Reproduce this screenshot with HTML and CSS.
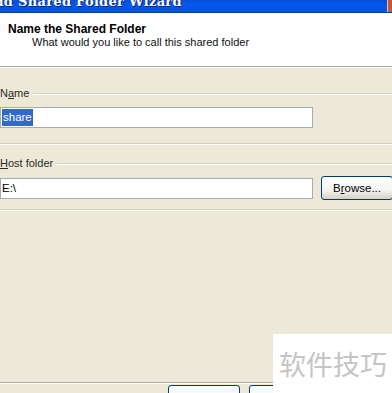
FILE: index.html
```html
<!DOCTYPE html>
<html lang="en">
<head>
  <meta charset="UTF-8" />
  <title>Add Shared Folder Wizard</title>
  <link rel="stylesheet" href="styles.css">
</head>
<body>
  <div class="window">
    <div class="titlebar">
      <span class="title">Add Shared Folder Wizard</span>
      <span class="close"></span>
    </div>

    <div class="header">
      <h1>Name the Shared Folder</h1>
      <p>What would you like to call this shared folder</p>
    </div>

    <div class="content">
      <div class="group-label"><span>N<u>a</u>me</span></div>
      <div class="field-row first">
        <div class="input"><span class="sel">share</span></div>
      </div>
      <div class="rule"></div>

      <div class="group-label"><span><u>H</u>ost folder</span></div>
      <div class="field-row">
        <div class="input">E:\</div>
        <button class="btn browse">B<u>r</u>owse...</button>
      </div>
      <div class="rule last"></div>
    </div>

    <div class="footer">
      <button class="btn" aria-label="Back"></button>
      <button class="btn" aria-label="Next"></button>
    </div>
  </div>

  <div class="watermark">软件技巧</div>
</body>
</html>
```

FILE: styles.css
```css
*,*::before,*::after{box-sizing:border-box;margin:0;padding:0}
html,body{width:392px;height:393px;overflow:hidden}
body{font-family:"Liberation Sans",Arial,sans-serif;font-size:11px;color:#000;background:#ece9d8;position:relative}
u{text-decoration:underline;text-underline-offset:1px}

.window{display:flex;flex-direction:column;height:393px}

/* title bar */
.titlebar{height:13px;background:linear-gradient(#0a4fd6,#0058ee 40%,#0a52dc);border-bottom:1px solid #0a3c9c;display:flex;justify-content:space-between;overflow:hidden;flex-shrink:0}
.title{font-family:"DejaVu Serif",serif;font-weight:700;font-size:13px;color:#fff;letter-spacing:.3px;line-height:13px;margin-top:-5px;margin-left:-16px;text-shadow:1px 1px 0 #0a246a}
.close{width:5px;height:13px;margin-top:-1px;background:#c8553a;border-left:1px solid #f0c0a8;border-radius:2px 0 0 0}

/* header */
.header{height:54px;background:#fff;padding:9px 0 0 8px;border-bottom:1px solid #aca899;box-shadow:0 1px 0 #fff;flex-shrink:0}
.header h1{font-size:12px;font-weight:700;line-height:14px}
.header p{margin-left:24px;line-height:13px;color:#111}

/* body */
.content{padding-top:19px;flex:1}
.group-label{display:flex;align-items:center;height:14px;color:#2a2a2a}
.group-label::after{content:"";flex:1;height:2px;border-top:1px solid #d0d0bf;border-bottom:1px solid #fff;margin-left:4px;margin-top:1px}
.field-row{display:flex;align-items:center;margin-top:6px;gap:8px}
.field-row.first{margin-top:7px}
.input{width:313px;height:21px;background:#fff;border:1px solid #a5acb2;padding:1px 1px;line-height:17px;font-size:11.5px}
.sel{background:#316ac5;color:#fff;display:inline-block;padding:0 1px}
.rule{height:2px;border-top:1px solid #d0d0bf;border-bottom:1px solid #fff;margin-top:15px;margin-bottom:11px}
.rule.last{margin-top:9px}

.btn{font-family:inherit;font-size:11.5px;width:72px;height:24px;border:1px solid #003c74;border-radius:3px;background:linear-gradient(#fff,#f4f4f0 60%,#d6d0c5);color:#000;flex-shrink:0}
.browse{margin-right:-2px}

/* footer */
.footer{height:11px;border-top:1px solid #aca899;box-shadow:inset 0 1px 0 #fff;display:flex;gap:9px;padding:2px 0 0 168px;overflow:hidden;flex-shrink:0}

/* watermark overlay */
.watermark{position:absolute;left:273px;top:334px;width:119px;height:59px;background:#fff;color:#c4c4c4;font-family:"Noto Sans CJK SC",sans-serif;font-size:27px;line-height:59px;padding-left:6px;white-space:nowrap}
```
